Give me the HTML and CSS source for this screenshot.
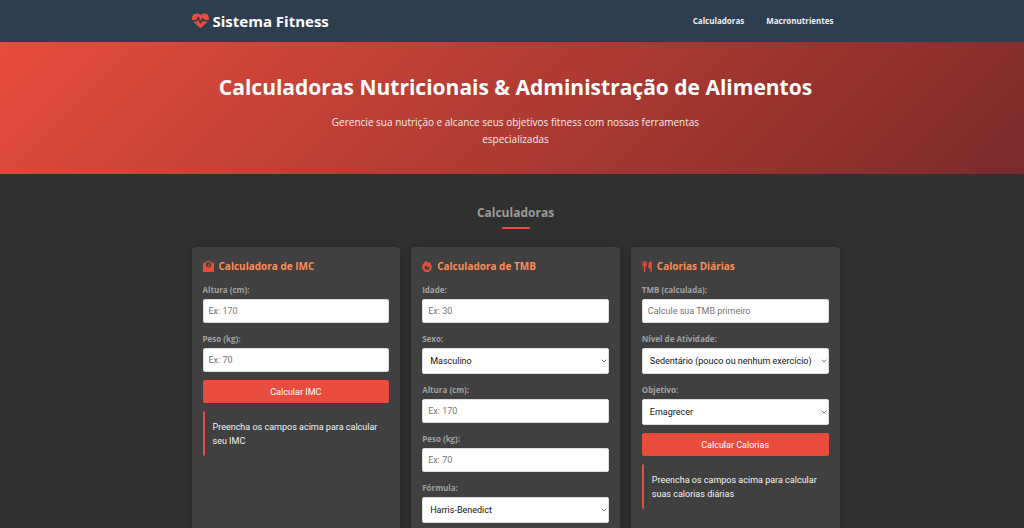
FILE: index.html
```html
<!DOCTYPE html>
<html lang="pt-BR">
<head>
<meta charset="utf-8">
<meta name="viewport" content="width=device-width, initial-scale=1">
<title>Sistema Fitness</title>
<link rel="stylesheet" href="styles.css">
</head>
<body>
<header class="header">
  <div class="container header-inner">
    <div class="logo">
      <svg class="logo-icon" viewBox="0 0 512 512" aria-hidden="true"><path d="M228.3 469.1L47.6 300.4c-4.2-3.9-8.2-8.1-11.9-12.4h87c22.6 0 43-13.6 51.7-34.5l10.5-25.2 49.3 109.5c3.8 8.5 12.1 14 21.4 14.1s17.8-5 22-13.3L320 253.7l1.7 3.4c9.5 19 28.9 31 50.1 31H476.3c-3.7 4.3-7.7 8.5-11.9 12.4L283.7 469.1c-7.5 7-17.4 10.9-27.7 10.9s-20.2-3.9-27.7-10.9zM503.7 240h-132c-3 0-5.8-1.7-7.2-4.4l-23.2-46.3c-4.1-8.1-12.4-13.3-21.5-13.3s-17.4 5.1-21.5 13.3l-41.4 82.8L205.9 158.2c-3.9-8.7-12.7-14.3-22.2-14.1s-18.1 5.9-21.8 14.8l-31.8 76.3c-1.2 3-4.2 4.9-7.4 4.9H16c-2.6 0-5 .4-7.3 1.1C3 225.2 0 208.2 0 190.9v-5.8c0-69.9 50.5-129.5 119.4-141C165 36.5 211.4 51.4 244 84l12 12 12-12c32.6-32.6 79-47.5 124.6-39.9C461.5 55.6 512 115.2 512 185.1v5.8c0 16.9-2.8 33.5-8.3 49.1z"/></svg>
      <span>Sistema Fitness</span>
    </div>
    <nav class="nav">
      <a href="#calculadoras">Calculadoras</a>
      <a href="#macronutrientes">Macronutrientes</a>
    </nav>
  </div>
</header>

<section class="hero">
  <div class="container">
    <h1 class="hero-title">Calculadoras Nutricionais &amp; Administração de Alimentos</h1>
    <p class="hero-text">Gerencie sua nutrição e alcance seus objetivos fitness com nossas ferramentas especializadas</p>
  </div>
</section>

<main class="main" id="calculadoras">
  <div class="container">
    <h2 class="section-title">Calculadoras</h2>
    <div class="cards">
      <form class="card">
        <h3 class="card-title">
          <svg class="icon" viewBox="0 0 512 512" aria-hidden="true"><path d="M128 176a128 128 0 1 1 256 0 128 128 0 1 1 -256 0zM391.8 64C359.5 24.9 310.7 0 256 0S152.5 24.9 120.2 64H64C28.7 64 0 92.7 0 128V448c0 35.3 28.7 64 64 64H448c35.3 0 64-28.7 64-64V128c0-35.3-28.7-64-64-64H391.8zM296 224c0-10.6-4.1-20.2-10.9-27.4l33.6-78.3c3.5-8.1-.3-17.5-8.4-21s-17.5 .3-21 8.4L255.7 184c-22 .1-39.7 18-39.7 40c0 22.1 17.9 40 40 40s40-17.9 40-40z"/></svg>
          Calculadora de IMC
        </h3>
        <div class="field">
          <label for="imc-altura">Altura (cm):</label>
          <input id="imc-altura" type="number" placeholder="Ex: 170">
        </div>
        <div class="field">
          <label for="imc-peso">Peso (kg):</label>
          <input id="imc-peso" type="number" placeholder="Ex: 70">
        </div>
        <button class="button" type="button">Calcular IMC</button>
        <p class="result">Preencha os campos acima para calcular seu IMC</p>
      </form>

      <form class="card">
        <h3 class="card-title">
          <svg class="icon icon-narrow" viewBox="0 0 448 512" aria-hidden="true"><path d="M159.3 5.4c7.8-7.3 19.9-7.2 27.7 .1c27.6 25.9 53.5 53.8 77.7 84c11-14.4 23.5-30.1 37-42.9c7.9-7.4 20.1-7.4 28 .1c34.6 33 63.9 76.6 84.5 118c20.3 40.8 33.8 82.5 33.8 111.9C448 404.2 348.2 512 224 512C98.4 512 0 404.1 0 276.5c0-38.4 17.8-85.3 45.4-131.7C73.3 97.7 112.7 48.6 159.3 5.4zM225.7 416c25.3 0 47.7-7 68.8-21c42.1-29.4 53.4-88.2 28.1-134.4c-4.5-9-16-9.6-22.5-2l-25.2 29.3c-6.6 7.6-18.5 7.4-24.7-.5c-16.5-21-46-58.5-62.8-79.8c-6.3-8-18.3-8.1-24.7-.1c-33.8 42.5-50.8 69.3-50.8 99.4C112 375.4 162.6 416 225.7 416z"/></svg>
          Calculadora de TMB
        </h3>
        <div class="field">
          <label for="tmb-idade">Idade:</label>
          <input id="tmb-idade" type="number" placeholder="Ex: 30">
        </div>
        <div class="field">
          <label for="tmb-sexo">Sexo:</label>
          <select id="tmb-sexo"><option>Masculino</option></select>
        </div>
        <div class="field">
          <label for="tmb-altura">Altura (cm):</label>
          <input id="tmb-altura" type="number" placeholder="Ex: 170">
        </div>
        <div class="field">
          <label for="tmb-peso">Peso (kg):</label>
          <input id="tmb-peso" type="number" placeholder="Ex: 70">
        </div>
        <div class="field">
          <label for="tmb-formula">Fórmula:</label>
          <select id="tmb-formula"><option>Harris-Benedict</option></select>
        </div>
      </form>

      <form class="card">
        <h3 class="card-title">
          <svg class="icon icon-narrow" viewBox="0 0 448 512" aria-hidden="true"><path d="M416 0C400 0 288 32 288 176V288c0 35.3 28.7 64 64 64h32V480c0 17.7 14.3 32 32 32s32-14.3 32-32V352 240 32c0-17.7-14.3-32-32-32zM64 16C64 7.8 57.9 1 49.7 .1S34.2 4.6 32.4 12.5L2.1 148.8C.7 155.1 0 161.5 0 167.9c0 45.9 35.1 83.6 80 87.7V480c0 17.7 14.3 32 32 32s32-14.3 32-32V255.6c44.9-4.1 80-41.8 80-87.7c0-6.4-.7-12.8-2.1-19.1L191.6 12.5c-1.8-8-9.3-13.3-17.4-12.4S160 7.8 160 16V150.2c0 5.4-4.4 9.8-9.8 9.8c-5.1 0-9.3-3.9-9.8-9L127.9 14.6C127.2 6.3 120.3 0 112 0s-15.2 6.3-15.9 14.6L83.7 151c-.5 5.1-4.7 9-9.8 9c-5.4 0-9.8-4.4-9.8-9.8V16z"/></svg>
          Calorias Diárias
        </h3>
        <div class="field">
          <label for="cal-tmb">TMB (calculada):</label>
          <input id="cal-tmb" type="number" placeholder="Calcule sua TMB primeiro">
        </div>
        <div class="field">
          <label for="cal-nivel">Nível de Atividade:</label>
          <select id="cal-nivel"><option>Sedentário (pouco ou nenhum exercício)</option></select>
        </div>
        <div class="field">
          <label for="cal-objetivo">Objetivo:</label>
          <select id="cal-objetivo"><option>Emagrecer</option></select>
        </div>
        <button class="button" type="button">Calcular Calorias</button>
        <p class="result">Preencha os campos acima para calcular suas calorias diárias</p>
      </form>
    </div>
  </div>
</main>
</body>
</html>
```
FILE: styles.css
```css
* {
  box-sizing: border-box;
  margin: 0;
  padding: 0;
}

body {
  background: #303030;
  color: #f4f4f4;
  font-family: "Segoe UI", "Open Sans", "Noto Sans", sans-serif;
  font-size: 8px;
  line-height: 14px;
}

.header,
.hero,
.main {
  padding-left: 7px;
}

.container {
  max-width: 648px;
  margin: 0 auto;
}

.header {
  background: #2c3e50;
}

.header-inner {
  display: flex;
  align-items: center;
  justify-content: space-between;
  height: 42px;
}

.logo {
  display: flex;
  align-items: center;
  gap: 4px;
  color: #ffffff;
  font-size: 15px;
  font-weight: 700;
  line-height: 24px;
}

.logo-icon {
  width: 17px;
  height: 17px;
  margin-bottom: 2px;
  fill: #e74c3c;
}

.nav {
  display: flex;
  gap: 22px;
  padding-right: 6px;
}

.nav a {
  color: #ecf0f1;
  font-weight: 700;
  text-decoration: none;
}

.hero {
  padding-top: 31px;
  padding-bottom: 26px;
  background: linear-gradient(135deg, #e74c3c, #7b2a2a);
  color: #ffffff;
  text-align: center;
}

.hero-title {
  font-size: 21px;
  font-weight: 700;
  line-height: 28px;
}

.hero-text {
  max-width: 386px;
  margin: 13px auto 0;
  font-size: 10px;
  line-height: 17px;
  opacity: 0.9;
}

.main {
  padding-top: 29px;
  padding-bottom: 28px;
}

.section-title {
  display: flex;
  flex-direction: column;
  align-items: center;
  gap: 4px;
  color: #999999;
  font-size: 12px;
  font-weight: 700;
  line-height: 20px;
}

.section-title::after {
  width: 28px;
  height: 2px;
  background: #e74c3c;
  content: "";
}

.cards {
  display: grid;
  grid-template-columns: repeat(3, minmax(0, 1fr));
  gap: 11px;
  margin-top: 18px;
}

.card {
  padding: 11px;
  border-radius: 4px;
  background: #404040;
  box-shadow: 0 2px 8px rgba(0, 0, 0, 0.25);
}

.card-title {
  display: flex;
  align-items: center;
  gap: 5px;
  margin-bottom: 8px;
  color: #ff8c55;
  font-size: 10px;
  font-weight: 700;
  line-height: 16px;
}

.icon {
  width: 11px;
  height: 11px;
  fill: #e74c3c;
}

.icon-narrow {
  width: 10px;
}

.field {
  margin-bottom: 8px;
}

.field label {
  display: block;
  margin-bottom: 2px;
  color: #a0a0a0;
  font-weight: 700;
  line-height: 15px;
}

.field input,
.field select,
.button,
.result {
  font-family: "Segoe UI", Roboto, "Noto Sans", sans-serif;
  font-size: 9px;
}

.field input,
.field select {
  display: block;
  width: 100%;
  height: 24px;
  padding: 0 5px;
  border: 1px solid #dddddd;
  border-radius: 2px;
  background: #ffffff;
  color: #111111;
}

.field input::placeholder {
  color: #757575;
}

.field select {
  height: 26px;
  padding: 0 7px;
  appearance: none;
  background: #ffffff url("data:image/svg+xml,%3Csvg xmlns='http://www.w3.org/2000/svg' viewBox='0 0 6 4'%3E%3Cpath d='M.7.7 3 3 5.3.7' fill='none' stroke='%23777'/%3E%3C/svg%3E") no-repeat right 1px center / 6px 4px;
}

.button {
  display: block;
  width: 100%;
  height: 23px;
  border: 0;
  border-radius: 2px;
  background: #e74c3c;
  color: #ffffff;
}

.result {
  margin-top: 8px;
  padding: 9px 8px 8px;
  border-left: 2px solid #e74c3c;
  border-radius: 2px;
}
```
